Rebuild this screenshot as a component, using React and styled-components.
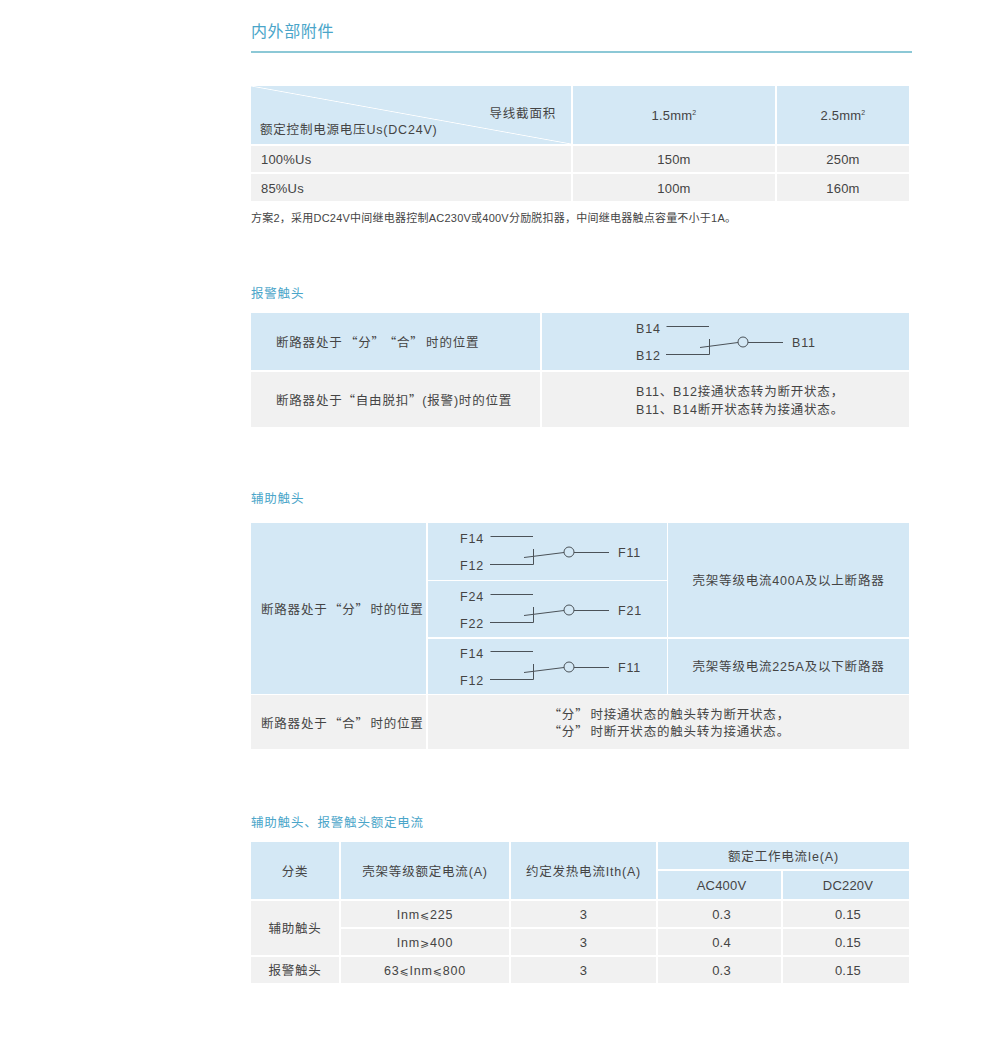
import React from 'react';
import styled, { createGlobalStyle } from 'styled-components';

const BLUE = '#d4e8f5';
const GREY = '#f1f1f1';
const TEXT = '#444';
const ACCENT = '#4aa5c9';

const GlobalStyle = createGlobalStyle`
  html, body {
    margin: 0;
    background: #fff;
  }
  body {
    font-family: "Liberation Sans", "Noto Sans CJK SC", sans-serif;
    color: ${TEXT};
  }
`;

const Page = styled.div`
  width: 661px;
  min-height: 1037px;
  margin-left: 251px;
  box-sizing: border-box;
`;

const Title = styled.h1`
  margin: 0;
  padding: 22px 0 9px;
  font-size: 16px;
  line-height: 20px;
  font-weight: 400;
  letter-spacing: 0.6px;
  color: ${ACCENT};
  border-bottom: 2px solid #8cc8d6;
`;

const Heading = styled.h2`
  margin: ${(p) => p.$top}px 0 ${(p) => p.$bottom}px;
  font-size: 12.5px;
  line-height: 16px;
  font-weight: 400;
  letter-spacing: 0.8px;
  color: ${ACCENT};
`;

const Table = styled.div`
  display: grid;
  width: 658px;
  gap: ${(p) => p.$gap || 2}px;
  margin-top: ${(p) => p.$top || 0}px;
  grid-template-columns: ${(p) => p.$cols};
  grid-template-rows: ${(p) => p.$rows};
`;

const Cell = styled.div`
  display: flex;
  flex-direction: column;
  justify-content: center;
  align-items: ${(p) => (p.$left ? 'flex-start' : 'center')};
  padding-top: 2px;
  padding-left: ${(p) => p.$indent || 0}px;
  grid-column: span ${(p) => p.$colSpan || 1};
  grid-row: span ${(p) => p.$rowSpan || 1};
  background: ${(p) => (p.$blue ? BLUE : GREY)};
  font-size: ${(p) => (p.$num ? 13 : 12.5)}px;
  line-height: ${(p) => p.$leading || 18}px;
  letter-spacing: ${(p) => (p.$num ? 0.2 : 0.8)}px;
  white-space: nowrap;
`;

const CrossCell = styled(Cell)`
  display: block;
  padding: 19px 15px 0 9px;
  background: linear-gradient(
    to top right,
    ${BLUE} calc(50% - 0.8px),
    #fff 50%,
    ${BLUE} calc(50% + 0.8px)
  );
`;

const CrossTop = styled.div`
  text-align: right;
`;

const CrossBottom = styled.div`
  margin-top: -2px;
`;

const Note = styled.p`
  margin: 9px 0 0;
  font-size: 11px;
  line-height: 16px;
  letter-spacing: 0.23px;
`;

const Quote = styled.span`
  font-family: "Noto Sans CJK SC", sans-serif;
  padding: 0 ${(p) => p.$pad || 0}px;
`;

const Sup = styled.sup`
  font-size: 7px;
  line-height: 0;
  vertical-align: 5px;
`;

const Small = styled.span`
  font-family: "DejaVu Sans", sans-serif;
  font-size: 11px;
`;

const Drawing = styled.svg`
  display: block;
  flex: none;
  width: 190px;
  height: 55px;
`;

const Wire = styled.path`
  fill: none;
  stroke: #4b5258;
  stroke-width: 1;
`;

const Pin = styled.circle`
  fill: none;
  stroke: #4b5258;
  stroke-width: 1;
`;

const Label = styled.text`
  fill: ${TEXT};
  font-size: 12.5px;
  letter-spacing: 0.8px;
`;

// the B contact in the first table sits 2px tighter than the F ones
function Contact({ top, bottom, common, tight }) {
  const dx = tight ? -2 : 0;
  return (
    <Drawing viewBox="0 2 190 55">
      <Label x="0" y="20">{top}</Label>
      <Label x="0" y="47">{bottom}</Label>
      <Label x={158 + dx} y="34">{common}</Label>
      <Wire d="M30.5 13.5H73" />
      <Wire d="M30 41.5H73.5V26" />
      <Wire d={`M64 34.5L${104 + dx} 29.5`} />
      <Pin cx={109 + dx} cy="29" r="5" />
      <Wire d={`M${114 + dx} 29.5H${149 + dx}`} />
    </Drawing>
  );
}

export default function App() {
  return (
    <Page>
      <GlobalStyle />
      <Title>内外部附件</Title>

      <Table $top={33} $cols="320px 202px 132px" $rows="58px 26px 27px">
        <CrossCell>
          <CrossTop>导线截面积</CrossTop>
          <CrossBottom>额定控制电源电压Us(DC24V)</CrossBottom>
        </CrossCell>
        <Cell $blue $num>
          <span>1.5mm<Sup>2</Sup></span>
        </Cell>
        <Cell $blue $num>
          <span>2.5mm<Sup>2</Sup></span>
        </Cell>
        <Cell $num $left $indent={10}>100%Us</Cell>
        <Cell $num>150m</Cell>
        <Cell $num>250m</Cell>
        <Cell $num $left $indent={10}>85%Us</Cell>
        <Cell $num>100m</Cell>
        <Cell $num>160m</Cell>
      </Table>
      <Note>方案2，采用DC24V中间继电器控制AC230V或400V分励脱扣器，中间继电器触点容量不小于1A。</Note>

      <Heading $top={60} $bottom={11}>报警触头</Heading>
      <Table $cols="289px 367px" $rows="57px 55px">
        <Cell $blue $left $indent={25}>
          <span>断路器处于<Quote $pad={2.5}>“分”</Quote><Quote $pad={2.5}>“合”</Quote>时的位置</span>
        </Cell>
        <Cell $blue $left $indent={94}>
          <Contact tight top="B14" bottom="B12" common="B11" />
        </Cell>
        <Cell $left $indent={25}>
          <span>断路器处于<Quote>“自由脱扣”</Quote>(报警)时的位置</span>
        </Cell>
        <Cell $left $indent={94}>
          <div>B11、B12接通状态转为断开状态，</div>
          <div>B11、B14断开状态转为接通状态。</div>
        </Cell>
      </Table>

      <Heading $top={64} $bottom={16}>辅助触头</Heading>
      <Table $gap={1.5} $cols="175px 239px 241px" $rows="56.5px 56px 55px 54px">
        <Cell $blue $rowSpan={3} $left $indent={10}>
          <span>断路器处于<Quote $pad={1.5}>“分”</Quote>时的位置</span>
        </Cell>
        <Cell $blue $left $indent={32}>
          <Contact top="F14" bottom="F12" common="F11" />
        </Cell>
        <Cell $blue $rowSpan={2}>壳架等级电流400A及以上断路器</Cell>
        <Cell $blue $left $indent={32}>
          <Contact top="F24" bottom="F22" common="F21" />
        </Cell>
        <Cell $blue $left $indent={32}>
          <Contact top="F14" bottom="F12" common="F11" />
        </Cell>
        <Cell $blue>壳架等级电流225A及以下断路器</Cell>
        <Cell $left $indent={10}>
          <span>断路器处于<Quote $pad={1.5}>“合”</Quote>时的位置</span>
        </Cell>
        <Cell $colSpan={2} $leading={16}>
          <div><Quote $pad={2}>“分”</Quote>时接通状态的触头转为断开状态，</div>
          <div><Quote $pad={2}>“分”</Quote>时断开状态的触头转为接通状态。</div>
        </Cell>
      </Table>

      <Heading $top={66} $bottom={11}>辅助触头、报警触头额定电流</Heading>
      <Table $cols="88px 168px 145px 123px 126px" $rows="27px 28px 26px 26px 26px">
        <Cell $blue $rowSpan={2}>分类</Cell>
        <Cell $blue $rowSpan={2}>壳架等级额定电流(A)</Cell>
        <Cell $blue $rowSpan={2}>约定发热电流Ith(A)</Cell>
        <Cell $blue $colSpan={2}>额定工作电流Ie(A)</Cell>
        <Cell $blue $num $indent={4}>AC400V</Cell>
        <Cell $blue $num $indent={4}>DC220V</Cell>
        <Cell $rowSpan={2}>辅助触头</Cell>
        <Cell><span>Inm<Small>⩽</Small>225</span></Cell>
        <Cell $num>3</Cell>
        <Cell $num $indent={4}>0.3</Cell>
        <Cell $num $indent={4}>0.15</Cell>
        <Cell><span>Inm<Small>⩾</Small>400</span></Cell>
        <Cell $num>3</Cell>
        <Cell $num $indent={4}>0.4</Cell>
        <Cell $num $indent={4}>0.15</Cell>
        <Cell>报警触头</Cell>
        <Cell><span>63<Small>⩽</Small>Inm<Small>⩽</Small>800</span></Cell>
        <Cell $num>3</Cell>
        <Cell $num $indent={4}>0.3</Cell>
        <Cell $num $indent={4}>0.15</Cell>
      </Table>
    </Page>
  );
}
